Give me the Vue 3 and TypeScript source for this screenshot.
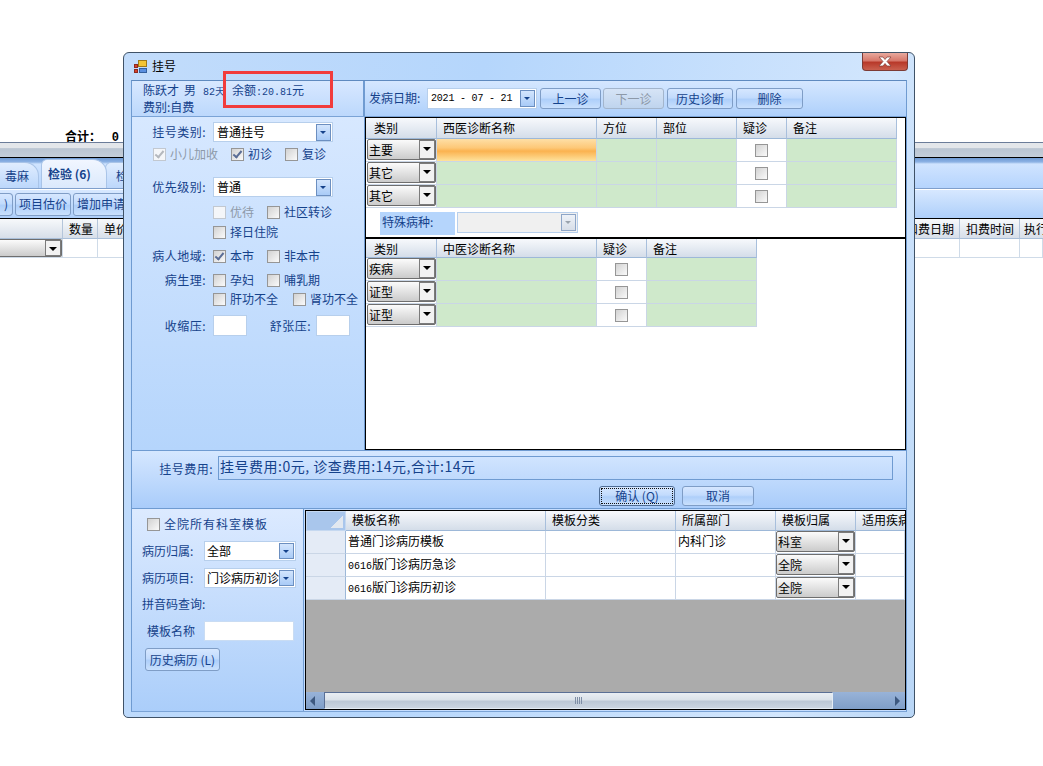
<script setup lang="ts">
interface CheckItem {
  text: string;
  width: number;
  checked?: boolean;
  disabled?: boolean;
}

const westRows = ["主要", "其它", "其它"];
const chineseRows = ["疾病", "证型", "证型"];

const templates = [
  { name: "普通门诊病历模板", code: "", dept: "内科门诊", owner: "科室" },
  { name: "版门诊病历急诊", code: "0616", dept: "", owner: "全院" },
  { name: "版门诊病历初诊", code: "0616", dept: "", owner: "全院" },
];

const kindChecks: CheckItem[] = [
  { text: "小儿加收", width: 78, checked: true, disabled: true },
  { text: "初诊", width: 54, checked: true },
  { text: "复诊", width: 50 },
];
const priorityChecks: CheckItem[] = [
  { text: "优待", width: 54, disabled: true },
  { text: "社区转诊", width: 80 },
];
const areaChecks: CheckItem[] = [
  { text: "本市", width: 54, checked: true },
  { text: "非本市", width: 70 },
];
const bodyChecks: CheckItem[] = [
  { text: "孕妇", width: 54 },
  { text: "哺乳期", width: 70 },
];
const organChecks: CheckItem[] = [
  { text: "肝功不全", width: 80 },
  { text: "肾功不全", width: 70 },
];
</script>

<template>
  <div class="page">
    <!-- window behind the dialog -->
    <div class="back">
      <div class="total">合计： <b>0</b></div>
      <div class="back-band"></div>
      <div class="back-tabs">
        <span class="tab first">毒麻</span>
        <span class="tab active">检验 (6)</span>
        <span class="tab last">检</span>
      </div>
      <div class="back-tools">
        <button class="btn stub">)</button>
        <button class="btn tool">项目估价</button>
        <button class="btn tool">增加申请</button>
      </div>
      <div class="back-head">
        <span class="bh" style="width: 63px"></span>
        <span class="bh" style="width: 35px">数量</span>
        <span class="bh" style="width: 60px">单价</span>
        <span class="bh fill"></span>
        <span class="bh" style="width: 60px">扣费日期</span>
        <span class="bh" style="width: 60px">扣费时间</span>
        <span class="bh last-col">执行</span>
      </div>
      <div class="back-row">
        <span class="bc" style="width: 63px"><span class="cell-combo flat"><i class="cell-arrow"></i></span></span>
        <span class="bc" style="width: 35px"></span>
        <span class="bc" style="width: 60px"></span>
        <span class="bc fill"></span>
        <span class="bc" style="width: 60px"></span>
        <span class="bc" style="width: 60px"></span>
        <span class="bc last-col"></span>
      </div>
    </div>

    <!-- dialog -->
    <section class="win">
      <header class="title">
        <svg class="app-icon" width="15" height="15" viewBox="0 0 15 15">
          <rect x="5.500" y="1.500" width="8" height="6" fill="#f4c534" stroke="#a07a18" />
          <rect x="1.500" y="5.500" width="3" height="3" fill="#d8402c" stroke="#8c2a1e" />
          <rect x="1.500" y="10.500" width="3" height="3" fill="#d8402c" stroke="#8c2a1e" />
          <rect x="6.500" y="9.500" width="7" height="4" fill="#5a8fe0" stroke="#33609f" />
        </svg>
        <span class="title-text">挂号</span>
        <button class="close" aria-label="关闭">
          <svg width="16" height="11" viewBox="0 0 16 11">
            <path d="M2 1h4l2 2.500L10 1h4L10 5.500 14 10h-4L8 7.500 6 10H2l4-4.500z" fill="#fff" stroke="#7d3b35" stroke-width="0.700" />
          </svg>
        </button>
      </header>

      <div class="body">
        <div class="head-row">
          <div class="patient">
            <div>陈跃才<span class="male">男</span><span class="num age">82天</span><span class="balance">余额<span class="num">:20.81</span>元</span></div>
            <div>费别:自费</div>
          </div>
          <div class="visit">
            <label class="visit-label">发病日期:</label>
            <div class="combo date">
              <span class="num date-text">2021 - 07 - 21</span>
              <i class="combo-btn"></i>
            </div>
            <button class="btn w61">上一诊</button>
            <button class="btn w61" disabled>下一诊</button>
            <button class="btn w66">历史诊断</button>
            <button class="btn w67">删除</button>
          </div>
        </div>

        <div class="main-row">
          <aside class="form">
            <div class="row r1">
              <label class="lbl">挂号类别:</label>
              <div class="combo wide"><span>普通挂号</span><i class="combo-btn"></i></div>
            </div>
            <div class="row r-kind">
              <span v-for="c in kindChecks" :key="c.text" class="check" :class="{ off: c.disabled }" :style="{ width: c.width + 'px' }">
                <i class="box" :class="{ on: c.checked }"></i>{{ c.text }}
              </span>
            </div>
            <div class="row r-prio">
              <label class="lbl">优先级别:</label>
              <div class="combo wide"><span>普通</span><i class="combo-btn"></i></div>
            </div>
            <div class="row indent mt6">
              <span v-for="c in priorityChecks" :key="c.text" class="check" :class="{ off: c.disabled }" :style="{ width: c.width + 'px' }">
                <i class="box"></i>{{ c.text }}
              </span>
            </div>
            <div class="row indent mt2">
              <span class="check"><i class="box"></i>择日住院</span>
            </div>
            <div class="row mt6">
              <label class="lbl">病人地域:</label>
              <span v-for="c in areaChecks" :key="c.text" class="check" :style="{ width: c.width + 'px' }">
                <i class="box" :class="{ on: c.checked }"></i>{{ c.text }}
              </span>
            </div>
            <div class="row mt6">
              <label class="lbl">病生理:</label>
              <span v-for="c in bodyChecks" :key="c.text" class="check" :style="{ width: c.width + 'px' }">
                <i class="box"></i>{{ c.text }}
              </span>
            </div>
            <div class="row indent mt1">
              <span v-for="c in organChecks" :key="c.text" class="check" :style="{ width: c.width + 'px' }">
                <i class="box"></i>{{ c.text }}
              </span>
            </div>
            <div class="row r-bp">
              <label class="lbl">收缩压:</label>
              <input class="bp" />
              <label class="lbl-b">舒张压:</label>
              <input class="bp" />
            </div>
          </aside>

          <div class="diag">
            <div class="tbl west">
              <div class="th first-th">类别</div>
              <div class="th">西医诊断名称</div>
              <div class="th">方位</div>
              <div class="th">部位</div>
              <div class="th">疑诊</div>
              <div class="th">备注</div>
              <template v-for="(r, i) in westRows" :key="i">
                <div class="td"><span class="cell-combo">{{ r }}<i class="cell-arrow"></i></span></div>
                <div class="td" :class="i === 0 ? 'picked' : 'green'"></div>
                <div class="td green"></div>
                <div class="td green"></div>
                <div class="td mid"><i class="box"></i></div>
                <div class="td green"></div>
              </template>
            </div>
            <div class="special">
              <label class="special-label">特殊病种:</label>
              <div class="combo locked"><i class="combo-btn dim"></i></div>
            </div>
            <div class="tbl chinese">
              <div class="th first-th">类别</div>
              <div class="th">中医诊断名称</div>
              <div class="th">疑诊</div>
              <div class="th">备注</div>
              <template v-for="(r, i) in chineseRows" :key="i">
                <div class="td"><span class="cell-combo">{{ r }}<i class="cell-arrow"></i></span></div>
                <div class="td green"></div>
                <div class="td mid"><i class="box"></i></div>
                <div class="td green"></div>
              </template>
            </div>
          </div>
        </div>

        <div class="fee-band">
          <div class="fee-line">
            <label class="fee-label">挂号费用:</label>
            <div class="fee-box">挂号费用:0元, 诊查费用:14元,合计:14元</div>
          </div>
          <div class="fee-actions">
            <button class="btn ok"><span class="focus">确认 (Q)</span></button>
            <button class="btn cancel">取消</button>
          </div>
        </div>

        <div class="bottom">
          <aside class="tpl-form">
            <div class="all-check"><i class="box"></i>全院所有科室模板</div>
            <div class="tpl-row">
              <label>病历归属:</label>
              <div class="combo tpl"><span>全部</span><i class="combo-btn"></i></div>
            </div>
            <div class="tpl-row">
              <label>病历项目:</label>
              <div class="combo tpl"><span>门诊病历初诊</span><i class="combo-btn"></i></div>
            </div>
            <div class="pinyin">拼音码查询:</div>
            <div class="name-row">
              <label>模板名称</label>
              <input class="name-input" />
            </div>
            <button class="btn history">历史病历 (L)</button>
          </aside>

          <div class="grid">
            <div class="grid-table">
              <div class="th corner"></div>
              <div class="th">模板名称</div>
              <div class="th">模板分类</div>
              <div class="th">所属部门</div>
              <div class="th">模板归属</div>
              <div class="th clip">适用疾病</div>
              <template v-for="t in templates" :key="t.name">
                <div class="td rowhead"></div>
                <div class="td text"><span class="num tight">{{ t.code }}</span>{{ t.name }}</div>
                <div class="td"></div>
                <div class="td text">{{ t.dept }}</div>
                <div class="td"><span class="cell-combo owner">{{ t.owner }}<i class="cell-arrow"></i></span></div>
                <div class="td"></div>
              </template>
            </div>
            <div class="grid-empty"></div>
            <div class="hscroll">
              <i class="arrow-left"></i>
              <div class="thumb"><span class="grip"></span></div>
              <i class="arrow-right"></i>
            </div>
          </div>
        </div>
      </div>

      <div class="mark"></div>
    </section>
  </div>
</template>

<style scoped>
.page {
  position: relative;
  width: 1043px;
  height: 766px;
  overflow: hidden;
  background: #fff;
  font: 12px/16px "Noto Sans CJK SC", sans-serif;
  color: #000;
}

button {
  font: inherit;
  padding: 0;
}

i {
  display: block;
  font-style: normal;
}

.num {
  font-family: "Liberation Mono", monospace;
  font-size: 10px;
}

/* background window */
.back {
  padding-top: 129px;
}
.total {
  height: 13px;
  line-height: 14px;
  padding-left: 65px;
  font-weight: 700;
  white-space: nowrap;
}
.total b {
  font-family: "Liberation Mono", monospace;
  margin-left: 8px;
}
.back-band {
  height: 14px;
  background: linear-gradient(#e3e6ea 0, #e3e6ea 35%, #bac5d2 40%, #c5ced9 100%);
  border-top: 1px solid #6b7c99;
  border-bottom: 1px solid #000;
}
.back-tabs {
  height: 30px;
  display: flex;
  align-items: flex-end;
  background: linear-gradient(#6e9ad4 0, #8db2e4 4px, #d0e4ff 6px, #b5d4fd 100%);
  border-bottom: 1px solid #7f9fcc;
}
.tab {
  height: 26px;
  line-height: 26px;
  color: #15428b;
  border: 1px solid #a9c4e8;
  border-bottom: 0;
  border-radius: 6px 14px 0 0;
  background: linear-gradient(#e0edff, #bcd7fb);
  box-sizing: border-box;
  flex: none;
  white-space: nowrap;
}
.tab.first {
  width: 39px;
  padding-left: 5px;
  border-left: 0;
  border-radius: 0 14px 0 0;
}
.tab.active {
  width: 66px;
  margin-left: 2px;
  padding-left: 6px;
  height: 29px;
  line-height: 28px;
  font-weight: 700;
  background: linear-gradient(#f1f6ff, #dbe9fc);
  position: relative;
}
.tab.last {
  width: 40px;
  margin-left: -2px;
  padding-left: 10px;
}
.back-tools {
  height: 28px;
  display: flex;
  align-items: center;
  gap: 2px;
  background: linear-gradient(#d7e8ff, #aecffa);
  margin-top: 1px;
}
.back-tools .stub {
  width: 13px;
  height: 23px;
  border-left: 0;
  border-radius: 0 4px 4px 0;
}
.back-tools .tool {
  width: 56px;
  height: 23px;
  flex: none;
  overflow: hidden;
  white-space: nowrap;
}
.back-head {
  display: flex;
  height: 20px;
  border-top: 1px solid #000;
  background: linear-gradient(#f7f9fb, #d5dde8);
}
.bh {
  box-sizing: border-box;
  flex: none;
  padding-left: 6px;
  line-height: 19px;
  white-space: nowrap;
  border-right: 1px solid #b4c5da;
  border-bottom: 1px solid #a9bfd9;
}
.bh.fill,
.bc.fill {
  flex: 1;
}
.last-col {
  width: 23px;
  border-right: 0;
  padding-left: 4px;
  overflow: hidden;
  overflow: clip;
}
.back-row {
  display: flex;
  height: 19px;
}
.bc {
  box-sizing: border-box;
  flex: none;
  border-right: 1px solid #cfdbe8;
  border-bottom: 1px solid #cfdbe8;
}
.cell-combo.flat {
  border-left: 0;
  border-radius: 0 2px 2px 0;
  height: 18px;
  margin-left: 0;
}

/* dialog frame */
.win {
  position: absolute;
  left: 123px;
  top: 52px;
  width: 792px;
  height: 666px;
  box-sizing: border-box;
  display: flex;
  flex-direction: column;
  border: 1px solid #3f5267;
  border-radius: 6px 6px 5px 5px;
  background: linear-gradient(100deg, #c2dcfb 0, #b5d6fc 40%, #d2e6fd 85%, #b9d6f6 100%);
}
.title {
  height: 27px;
  flex: none;
  display: flex;
  align-items: flex-start;
  padding-left: 9px;
}
.app-icon {
  margin-top: 6px;
}
.title-text {
  margin: 5px 0 0 4px;
}
.close {
  margin: 0 6px 0 auto;
  width: 46px;
  height: 18px;
  border: 1px solid #7d3b35;
  border-top: 0;
  border-radius: 0 0 4px 4px;
  background: linear-gradient(#e8a99e 0, #d7786b 45%, #b8392a 55%, #c9604f 100%);
  display: flex;
  align-items: center;
  justify-content: center;
}
.body {
  flex: 1;
  margin: 0 7px 5px;
  display: flex;
  flex-direction: column;
  border-left: 1px solid #6f9bd1;
  border-right: 1px solid #6f9bd1;
  border-bottom: 1px solid #7aa3d6;
  border-top: 1px solid #5f8abf;
  background: #c6deff;
  min-height: 0;
}
.mark {
  position: absolute;
  left: 99px;
  top: 18px;
  width: 110px;
  height: 37px;
  box-sizing: border-box;
  border: 3px solid #f13c3c;
  pointer-events: none;
}

/* top strip */
.head-row {
  height: 35px;
  flex: none;
  display: flex;
  border-bottom: 1px solid #7aa3d6;
}
.patient {
  width: 233px;
  flex: none;
  box-sizing: border-box;
  padding: 2px 0 0 11px;
  line-height: 14px;
  color: #15428b;
  border-right: 2px solid #6f9bd1;
  background: linear-gradient(#d8e8ff, #bcd8fc);
  white-space: nowrap;
}
.male {
  margin-left: 5px;
}
.age {
  margin-left: 7px;
}
.balance {
  margin-left: 7px;
}
.visit {
  flex: 1;
  display: flex;
  align-items: flex-start;
  padding-top: 7px;
  background: linear-gradient(#d5e7ff, #aed0fb);
}
.visit-label {
  width: 58px;
  margin-left: 4px;
  line-height: 20px;
  color: #15428b;
  flex: none;
}
.combo {
  display: flex;
  align-items: center;
  box-sizing: border-box;
  background: #fff;
  border: 1px solid #b7cfec;
  height: 21px;
  padding: 1px 1px 1px 3px;
  flex: none;
}
.combo span {
  flex: 1;
  white-space: nowrap;
  overflow: hidden;
}
.combo-btn {
  width: 15px;
  height: 17px;
  flex: none;
  box-sizing: border-box;
  border: 1px solid #6c8fc0;
  background: linear-gradient(#d3e5fd, #a9cbf7);
  position: relative;
}
.combo-btn::after {
  content: "";
  position: absolute;
  left: 3px;
  top: 6px;
  border: 3px solid transparent;
  border-top: 3px solid #15428b;
  border-bottom: 0;
}
.combo-btn.dim {
  background: linear-gradient(#eef2f8, #d7dee8);
  border-color: #8ea6c8;
}
.combo-btn.dim::after {
  border-top-color: #9aa3ad;
}
.date {
  width: 110px;
  margin-right: 3px;
}
.date-text {
  font-size: 10px;
  letter-spacing: -0.200px;
}
.btn {
  box-sizing: border-box;
  height: 21px;
  flex: none;
  color: #15428b;
  border: 1px solid #7f9dc6;
  border-radius: 3px;
  background: linear-gradient(#d6e7ff 0, #c2dbfd 45%, #aecffa 55%, #c9e0fd 100%);
}
.btn:disabled {
  color: #8d99a8;
  border-color: #a3b5cc;
  background: linear-gradient(#d6e4f6, #bfd4ee);
}
.w61 {
  width: 61px;
  margin-right: 2px;
}
.w66 {
  width: 66px;
  margin: 0 3px 0 1px;
}
.w67 {
  width: 67px;
}

/* middle: form and diagnoses */
.main-row {
  height: 333px;
  flex: none;
  display: flex;
}
.form {
  width: 233px;
  flex: none;
  box-sizing: border-box;
  background: linear-gradient(#d7e8ff, #b5d5fc);
  border-right: 1px solid #6f9bd1;
  padding-top: 5px;
  color: #15428b;
}
.row {
  display: flex;
  align-items: center;
  min-height: 18px;
}
.lbl {
  width: 74px;
  text-align: right;
  margin-right: 7px;
  flex: none;
  letter-spacing: 0.500px;
  white-space: nowrap;
}
.indent {
  padding-left: 81px;
}
.r-kind {
  margin-top: 3px;
  padding-left: 21px;
}
.r-prio {
  margin-top: 14px;
}
.r-bp {
  margin-top: 7px;
}
.mt1 {
  margin-top: 1px;
}
.mt2 {
  margin-top: 2px;
}
.mt6 {
  margin-top: 6px;
}
.wide {
  width: 120px;
  height: 20px;
  color: #000;
}
.check {
  display: flex;
  align-items: center;
  gap: 4px;
  flex: none;
  white-space: nowrap;
  color: #15428b;
}
.check.off {
  color: #8d99a8;
}
.box {
  width: 13px;
  height: 13px;
  box-sizing: border-box;
  border: 1px solid #969696;
  background: linear-gradient(135deg, #d2d2d2, #fafafa);
  flex: none;
  position: relative;
}
.box.on::after {
  content: "";
  position: absolute;
  left: 3px;
  top: 0;
  width: 3px;
  height: 7px;
  border: solid #5a6d96;
  border-width: 0 2px 2px 0;
  transform: rotate(40deg);
}
.off .box {
  border-color: #c2c8d0;
  background: #f4f6f9;
}
.off .box.on::after {
  border-color: #b4b8be;
}
.bp {
  width: 34px;
  height: 21px;
  box-sizing: border-box;
  border: 1px solid #b7cfec;
  background: #fff;
  padding: 0;
  flex: none;
}
.lbl-b {
  width: 64px;
  margin-right: 5px;
  text-align: right;
  flex: none;
  letter-spacing: 0.500px;
  white-space: nowrap;
}

.diag {
  flex: 1;
  box-sizing: border-box;
  background: #fff;
  border: 1px solid #000;
  min-width: 0;
}
.tbl {
  display: grid;
  grid-auto-rows: 23px;
}
.west {
  grid-template-columns: 71px 160px 60px 80px 50px 110px;
  grid-template-rows: 21px;
}
.chinese {
  grid-template-columns: 71px 160px 50px 110px;
  grid-template-rows: 19px;
  border-top: 2px solid #000;
}
.th {
  box-sizing: border-box;
  padding-left: 6px;
  line-height: 19px;
  white-space: nowrap;
  overflow: hidden;
  background: linear-gradient(#f7f9fc, #d4dde9);
  border-right: 1px solid #a8bfdc;
  border-bottom: 1px solid #9db8d8;
}
.th.first-th {
  padding-left: 8px;
}
.td {
  box-sizing: border-box;
  border-right: 1px solid #cad6e6;
  border-bottom: 1px solid #cad6e6;
  min-width: 0;
}
.green {
  background: #cfe9cb;
}
.picked {
  background: linear-gradient(#fedfa6 0, #fdc878 40%, #fbb24f 55%, #fee29c 100%);
}
.mid {
  display: flex;
  align-items: center;
  justify-content: center;
}
.cell-combo {
  display: flex;
  align-items: center;
  height: 21px;
  box-sizing: border-box;
  padding-left: 1px;
  margin: 0 0 0 1px;
  border: 1px solid #6e6e6e;
  border-radius: 2px;
  background: linear-gradient(#fbfbfb, #cbcbcb);
  position: relative;
  line-height: 19px;
}
.cell-arrow {
  margin-left: auto;
  width: 16px;
  height: 100%;
  flex: none;
  box-sizing: border-box;
  border: 1px solid #7b7b7b;
  background: #f2f2f2;
  position: relative;
}
.cell-arrow::after {
  content: "";
  position: absolute;
  left: 3px;
  top: 6px;
  border: 4px solid transparent;
  border-top: 4px solid #000;
  border-bottom: 0;
}
.special {
  height: 29px;
  box-sizing: border-box;
  display: flex;
  align-items: flex-start;
  padding: 4px 0 0 14px;
  gap: 2px;
}
.special-label {
  width: 75px;
  height: 23px;
  line-height: 19px;
  padding-left: 2px;
  box-sizing: border-box;
  background: #b5d5fc;
  color: #15428b;
}
.locked {
  width: 121px;
  height: 21px;
  background: #f0f0f0;
  justify-content: flex-end;
}

/* fee band */
.fee-band {
  height: 59px;
  flex: none;
  box-sizing: border-box;
  border-top: 1px solid #6f9bd1;
  border-bottom: 1px solid #6f9bd1;
  background: linear-gradient(#d5e7ff, #a9ccfa);
  padding-top: 5px;
}
.fee-line {
  display: flex;
  align-items: flex-start;
  color: #15428b;
}
.fee-label {
  width: 81px;
  margin: 5px 5px 0 0;
  text-align: right;
  flex: none;
  letter-spacing: 0.500px;
  white-space: nowrap;
}
.fee-box {
  width: 675px;
  height: 24px;
  line-height: 18px;
  font-size: 14px;
  letter-spacing: 0.500px;
  box-sizing: border-box;
  padding-left: 1px;
  border: 1px solid #6f9bd1;
  flex: none;
}
.fee-actions {
  display: flex;
  gap: 7px;
  padding-left: 467px;
  margin-top: 6px;
}
.ok {
  width: 76px;
  height: 20px;
  border-color: #4e6c94;
  padding: 2px;
}
.focus {
  display: block;
  height: 14px;
  line-height: 13px;
  outline: 1px dotted #111;
}
.cancel {
  width: 72px;
  height: 20px;
}

/* template picker */
.bottom {
  flex: 1;
  display: flex;
  min-height: 0;
}
.tpl-form {
  width: 172px;
  flex: none;
  box-sizing: border-box;
  border-right: 1px solid #6f9bd1;
  background: linear-gradient(#dceaff, #abcefa);
  color: #15428b;
  padding: 7px 0 0 10px;
}
.all-check {
  display: flex;
  align-items: center;
  gap: 4px;
  padding-left: 5px;
  height: 16px;
  letter-spacing: 1px;
}
.tpl-row {
  display: flex;
  align-items: center;
  margin-top: 9px;
  height: 20px;
}
.tpl-row + .tpl-row {
  margin-top: 7px;
}
.tpl-row label {
  width: 62px;
  flex: none;
}
.tpl {
  width: 92px;
  height: 20px;
  color: #000;
  padding-left: 2px;
}
.tpl .combo-btn {
  height: 16px;
}
.pinyin {
  margin-top: 8px;
}
.name-row {
  display: flex;
  align-items: center;
  margin-top: 9px;
  padding-left: 5px;
}
.name-row label {
  width: 57px;
  flex: none;
}
.name-input {
  width: 90px;
  height: 20px;
  box-sizing: border-box;
  border: 1px solid #c9dcf3;
  background: #fff;
  padding: 0;
}
.history {
  display: block;
  width: 75px;
  height: 23px;
  margin: 7px 0 0 3px;
  white-space: nowrap;
}
.grid {
  flex: 1;
  min-width: 0;
  margin: 1px 0 1px 1px;
  border: 1px solid #000;
  display: flex;
  flex-direction: column;
  background: #ababab;
}
.grid-table {
  display: grid;
  grid-template-columns: 40px 200px 130px 100px 80px 49px;
  grid-template-rows: 20px;
  grid-auto-rows: 23px;
  background: #fff;
  flex: none;
}
.grid-table .th {
  padding-left: 6px;
  line-height: 18px;
}
.grid-table .clip {
  border-right: 0;
  text-overflow: clip;
}
.grid-table .th.corner {
  background: linear-gradient(135deg, transparent 50%, #e2e8f0 50%) no-repeat right 2px bottom 2px / 12px 12px, #a9c6ec;
  border: 1px solid #c5d8f0;
}
.rowhead {
  background: #e4ebf6;
  border-right-color: #9db8d8;
}
.text {
  padding-left: 2px;
  line-height: 20px;
  white-space: nowrap;
  overflow: hidden;
}
.owner {
  margin: 0;
}
.grid-empty {
  flex: 1;
}
.hscroll {
  height: 17px;
  flex: none;
  position: relative;
  display: flex;
  align-items: stretch;
  background: linear-gradient(#98b3d8, #7f9ec8);
}
.arrow-left,
.arrow-right {
  position: absolute;
  top: 4px;
  border: 5px solid transparent;
}
.arrow-left {
  left: 4px;
  border-left: 0;
  border-right-color: #3d587f;
}
.arrow-right {
  right: 5px;
  border-right: 0;
  border-left-color: #3d587f;
}
.thumb {
  margin-left: 18px;
  width: 509px;
  box-sizing: border-box;
  border: 1px solid #5a6f95;
  border-right-color: #e4ecf4;
  border-bottom-color: #e4ecf4;
  border-radius: 1px;
  background: linear-gradient(#e9eef3 0, #dbe2ea 45%, #bcc8d6 55%, #cbd5e1 100%);
  display: flex;
  align-items: center;
  justify-content: center;
}
.grip {
  width: 7px;
  height: 7px;
  background: repeating-linear-gradient(90deg, #7e8ea6 0 1px, transparent 1px 2px);
}
</style>

<style>
html,
body {
  margin: 0;
  background: #fff;
}
</style>
